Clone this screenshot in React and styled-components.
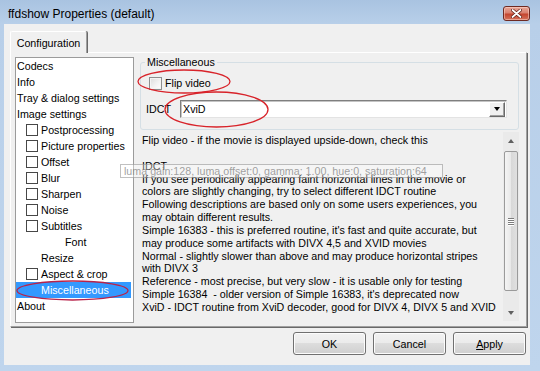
import React from "react";
import styled, { createGlobalStyle } from "styled-components";

const GlobalStyle = createGlobalStyle`
  html, body {
    margin: 0;
    padding: 0;
  }
  body {
    font-family: "Liberation Sans", Arial, sans-serif;
    font-size: 10.7px;
    color: #000;
  }
`;

const Window = styled.div`
  position: relative;
  width: 540px;
  height: 371px;
  box-sizing: border-box;
  padding: 0 10px 6px 4px;
  background: linear-gradient(to bottom, #a9c3e1 0px, #b8cfe9 24px, #bfd5ed 100%);
  display: flex;
  flex-direction: column;
  overflow: hidden;
`;

const TitleBar = styled.div`
  height: 24px;
  flex: none;
  display: flex;
  align-items: center;
  justify-content: space-between;
  padding-left: 4px;
`;

const TitleText = styled.div`
  font-size: 12px;
  padding-top: 3px;
  color: #000;
`;

const CloseButton = styled.div`
  width: 27px;
  height: 15px;
  margin-top: 2px;
  box-sizing: border-box;
  border: 1px solid #6e2a22;
  border-radius: 3px;
  background: linear-gradient(to bottom, #e9a899 0%, #d9806f 45%, #c4452f 55%, #d4725c 100%);
  box-shadow: inset 0 0 0 1px rgba(255, 220, 210, 0.5);
  display: flex;
  align-items: center;
  justify-content: center;
`;

const Client = styled.div`
  flex: 1;
  background: #f0f0f0;
  padding: 7px 3px 0 6px;
  display: flex;
  flex-direction: column;
`;

const TabStrip = styled.div`
  height: 21px;
  display: flex;
  align-items: flex-end;
  position: relative;
  z-index: 1;
`;

const Tab = styled.div`
  width: 77px;
  height: 22px;
  margin-bottom: -1px;
  box-sizing: border-box;
  background: #f0f0f0;
  border: 1px solid #fff;
  border-right-color: #a0a0a0;
  border-bottom: none;
  border-radius: 2px 2px 0 0;
  box-shadow: 1px 0 0 #696969;
  display: flex;
  align-items: center;
  justify-content: center;
`;

const Pane = styled.div`
  width: 517px;
  height: 275px;
  box-sizing: border-box;
  border: 1px solid #fff;
  border-right-color: #a0a0a0;
  border-bottom-color: #a0a0a0;
  box-shadow: 1px 1px 0 #696969;
  padding: 4px 7px 3px 4px;
  display: flex;
  gap: 6px;
`;

const Tree = styled.div`
  width: 119px;
  flex: none;
  box-sizing: border-box;
  background: #fff;
  border: 1px solid #9b9b9b;
  display: flex;
  flex-direction: column;
`;

const TreeRow = styled.div`
  height: 16px;
  display: flex;
  align-items: center;
  padding-left: ${(p) => p.$indent}px;
  margin-right: 2px;
  white-space: nowrap;
  background: ${(p) => (p.$selected ? "#3399ff" : "transparent")};
  color: ${(p) => (p.$selected ? "#fff" : "#000")};
`;

const TreeCheck = styled.span`
  width: 12px;
  height: 12px;
  box-sizing: border-box;
  border: 1px solid #474747;
  background: #fff;
  margin-right: 3px;
  flex: none;
`;

const RightColumn = styled.div`
  flex: 1;
  display: flex;
  flex-direction: column;
  min-width: 0;
`;

const GroupBox = styled.fieldset`
  margin: 0;
  padding: 0 11px 11px 5px;
  border: 1px solid #d5dfe5;
  border-radius: 3px;
  min-width: 0;
`;

const Legend = styled.legend`
  padding: 0 2px;
  margin-left: -1px;
  line-height: 11px;
`;

const CheckRow = styled.label`
  display: flex;
  align-items: center;
  height: 16px;
  margin-top: 7px;
  padding-left: 3px;
  gap: 3px;
`;

const CheckBox = styled.span`
  width: 13px;
  height: 13px;
  box-sizing: border-box;
  border: 1px solid #8e8f8f;
  background: linear-gradient(135deg, #dcdcdc 0%, #f4f4f4 60%, #fff 100%);
  box-shadow: inset 0 0 0 1px #f4f4f4;
  flex: none;
`;

const ComboRow = styled.div`
  display: flex;
  align-items: center;
  height: 18px;
  margin-top: 9px;
`;

const FieldLabel = styled.span`
  width: 34px;
  flex: none;
`;

const Combo = styled.div`
  flex: 1;
  height: 18px;
  box-sizing: border-box;
  background: #fff;
  border: 1px solid;
  border-color: #7f7f7f #e3e3e3 #e3e3e3 #7f7f7f;
  box-shadow: inset 1px 1px 0 #c4c4c4;
  display: flex;
  align-items: center;
  justify-content: space-between;
  padding-left: 2px;
`;

const DropButton = styled.div`
  width: 16px;
  height: 15px;
  box-sizing: border-box;
  background: #f0f0f0;
  border: 1px solid;
  border-color: #fff #696969 #696969 #fff;
  box-shadow: inset -1px -1px 0 #a0a0a0;
  display: flex;
  align-items: center;
  justify-content: center;
  margin-right: 1px;
`;

const Arrow = styled.span`
  width: 0;
  height: 0;
  border-left: 3.5px solid transparent;
  border-right: 3.5px solid transparent;
  border-${(p) => (p.$up ? "bottom" : "top")}: 4px solid ${(p) => p.$color || "#000"};
`;

const Description = styled.div`
  flex: 1;
  display: flex;
  min-height: 0;
`;

const DescText = styled.div`
  flex: 1;
  padding: 4px 0 0 2px;
  line-height: 12.85px;
  overflow: hidden;
`;

const DescLine = styled.div`
  white-space: pre;
  height: 12.85px;
`;

const ScrollBar = styled.div`
  width: 16px;
  flex: none;
  margin: 2px 0 2px 0;
  background: #eaeaea;
  display: flex;
  flex-direction: column;
`;

const ScrollArrow = styled.div`
  height: 17px;
  flex: none;
  display: flex;
  align-items: center;
  justify-content: center;
`;

const ScrollTrack = styled.div`
  flex: 1;
  padding-top: 2px;
`;

const Thumb = styled.div`
  height: 140px;
  margin: 0 1px;
  box-sizing: border-box;
  border: 1px solid #9a9a9a;
  border-radius: 2px;
  background: linear-gradient(to right, #f4f4f4 0%, #e8e8e8 50%, #d8d8d8 51%, #e0e0e0 100%);
  display: flex;
  flex-direction: column;
  align-items: center;
  justify-content: center;
  gap: 1px;
`;

const Grip = styled.span`
  width: 6px;
  height: 1px;
  background: #7c7c7c;
  box-shadow: 0 1px 0 #fff;
`;

const ButtonRow = styled.div`
  display: flex;
  justify-content: flex-end;
  gap: 7px;
  margin-top: 5px;
  padding-right: 1px;
`;

const Button = styled.button`
  width: 73px;
  height: 23px;
  box-sizing: border-box;
  border: 1px solid #707070;
  border-radius: 3px;
  background: linear-gradient(to bottom, #f2f2f2 0%, #ebebeb 49%, #dddddd 50%, #cfcfcf 100%);
  box-shadow: inset 0 0 0 1px #fcfcfc;
  font-family: "Liberation Sans", Arial, sans-serif;
  font-size: 10.7px;
  color: #000;
  padding: 0;
`;

const Tooltip = styled.div`
  position: absolute;
  left: 120px;
  top: 164px;
  width: 323px;
  height: 14px;
  box-sizing: border-box;
  padding-left: 3px;
  line-height: 12px;
  white-space: nowrap;
  background: rgba(255, 255, 255, 0.35);
  border: 1px solid rgba(130, 130, 130, 0.5);
  color: rgba(120, 120, 120, 0.7);
`;

const Annotations = styled.svg`
  position: absolute;
  left: 0;
  top: 0;
  pointer-events: none;
`;

const treeItems = [
  { label: "Codecs", indent: 1 },
  { label: "Info", indent: 1 },
  { label: "Tray & dialog settings", indent: 1 },
  { label: "Image settings", indent: 1 },
  { label: "Postprocessing", indent: 10, check: true },
  { label: "Picture properties", indent: 10, check: true },
  { label: "Offset", indent: 10, check: true },
  { label: "Blur", indent: 10, check: true },
  { label: "Sharpen", indent: 10, check: true },
  { label: "Noise", indent: 10, check: true },
  { label: "Subtitles", indent: 10, check: true },
  { label: "Font", indent: 49 },
  { label: "Resize", indent: 25 },
  { label: "Aspect & crop", indent: 10, check: true },
  { label: "Miscellaneous", indent: 25, selected: true },
  { label: "About", indent: 1 },
];

const descLines = [
  "Flip video - if the movie is displayed upside-down, check this",
  "",
  "IDCT",
  "If you see periodically appearing faint horizontal lines in the movie or",
  "colors are slightly changing, try to select different IDCT routine",
  "Following descriptions are based only on some users experiences, you",
  "may obtain different results.",
  "Simple 16383 - this is preferred routine, it's fast and quite accurate, but",
  "may produce some artifacts with DIVX 4,5 and XVID movies",
  "Normal - slightly slower than above and may produce horizontal stripes",
  "with DIVX 3",
  "Reference - most precise, but very slow - it is usable only for testing",
  "Simple 16384  - older version of Simple 16383, it's deprecated now",
  "XviD - IDCT routine from XviD decoder, good for DIVX 4, DIVX 5 and XVID",
];

const App = () => {
  return (
    <>
      <GlobalStyle />
      <Window>
        <TitleBar>
          <TitleText>ffdshow Properties (default)</TitleText>
          <CloseButton>
            <svg width="11" height="9" viewBox="0 0 11 9">
              <path d="M1.5 1 L9.5 8 M9.5 1 L1.5 8" stroke="#5a1a12" strokeWidth="3.2" strokeLinecap="round" />
              <path d="M1.5 1 L9.5 8 M9.5 1 L1.5 8" stroke="#fff" strokeWidth="1.8" strokeLinecap="round" />
            </svg>
          </CloseButton>
        </TitleBar>
        <Client>
          <TabStrip>
            <Tab>Configuration</Tab>
          </TabStrip>
          <Pane>
            <Tree>
              {treeItems.map((item) => (
                <TreeRow key={item.label} $indent={item.indent} $selected={item.selected}>
                  {item.check && <TreeCheck />}
                  {item.label}
                </TreeRow>
              ))}
            </Tree>
            <RightColumn>
              <GroupBox>
                <Legend>Miscellaneous</Legend>
                <CheckRow>
                  <CheckBox />
                  Flip video
                </CheckRow>
                <ComboRow>
                  <FieldLabel>IDCT</FieldLabel>
                  <Combo>
                    XviD
                    <DropButton>
                      <Arrow />
                    </DropButton>
                  </Combo>
                </ComboRow>
              </GroupBox>
              <Description>
                <DescText>
                  {descLines.map((line, i) => (
                    <DescLine key={i}>{line}</DescLine>
                  ))}
                </DescText>
                <ScrollBar>
                  <ScrollArrow>
                    <Arrow $up $color="#606060" />
                  </ScrollArrow>
                  <ScrollTrack>
                    <Thumb>
                      <Grip />
                      <Grip />
                      <Grip />
                      <Grip />
                    </Thumb>
                  </ScrollTrack>
                  <ScrollArrow>
                    <Arrow $color="#606060" />
                  </ScrollArrow>
                </ScrollBar>
              </Description>
            </RightColumn>
          </Pane>
          <ButtonRow>
            <Button>OK</Button>
            <Button>Cancel</Button>
            <Button>
              <u>A</u>pply
            </Button>
          </ButtonRow>
        </Client>
        <Tooltip>luma gain:128, luma offset:0, gamma: 1.00, hue:0, saturation:64</Tooltip>
        <Annotations width="540" height="371">
          <ellipse cx="184" cy="81.5" rx="46" ry="11.5" fill="none" stroke="#d8232a" strokeWidth="1.3" />
          <ellipse cx="216.5" cy="109.5" rx="51.5" ry="17.5" fill="none" stroke="#d8232a" strokeWidth="1.3" />
          <ellipse cx="72.5" cy="290.5" rx="55.5" ry="9.5" fill="none" stroke="#b8234a" strokeWidth="1.3" />
        </Annotations>
      </Window>
    </>
  );
};

export default App;
